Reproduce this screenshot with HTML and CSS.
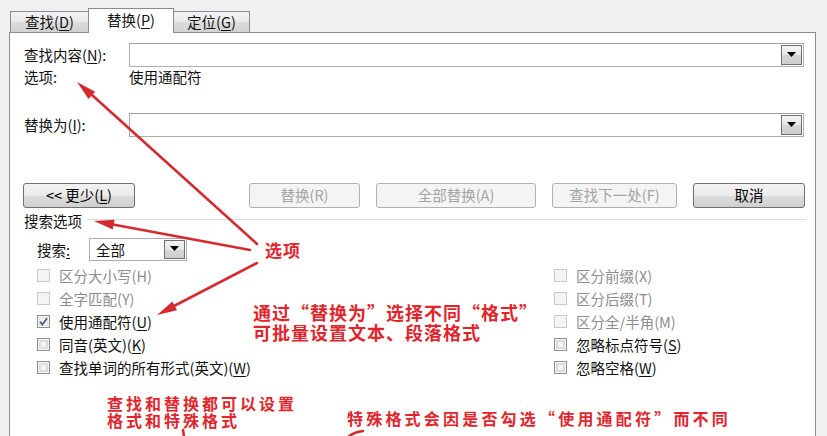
FILE: index.html
```html
<!DOCTYPE html>
<html lang="zh-CN">
<head>
<meta charset="utf-8">
<link rel="stylesheet" href="styles.css">
</head>
<body>
<div class="screen">
  <div class="tabs">
    <div class="tab t1">查找(<u>D</u>)</div>
    <div class="tab active">替换(<u>P</u>)</div>
    <div class="tab t3">定位(<u>G</u>)</div>
  </div>
  <div class="panel">
    <div class="field-row">
      <span class="lbl">查找内容(<u>N</u>):</span>
      <div class="combo"><span class="combo-text"></span><span class="drop"><svg width="9" height="5" viewBox="0 0 9 5"><path d="M0 0h9L4.5 5z" fill="#000"/></svg></span></div>
    </div>
    <div class="opt-row"><span class="lbl">选项:</span><span>使用通配符</span></div>
    <div class="field-row replace-row">
      <span class="lbl">替换为(<u>I</u>):</span>
      <div class="combo"><span class="combo-text"></span><span class="drop"><svg width="9" height="5" viewBox="0 0 9 5"><path d="M0 0h9L4.5 5z" fill="#000"/></svg></span></div>
    </div>
    <div class="btn-row">
      <button class="btn b-less">&lt;&lt; 更少(<u>L</u>)</button>
      <span class="spacer"></span>
      <button class="btn disabled b-rep">替换(R)</button>
      <button class="btn disabled b-all">全部替换(A)</button>
      <button class="btn disabled b-next">查找下一处(F)</button>
      <button class="btn b-cancel">取消</button>
    </div>
    <div class="group-head"><span>搜索选项</span><span class="rule"></span></div>
    <div class="search-row">
      <span class="slbl">搜索<u>:</u></span>
      <div class="select"><span class="sel-text">全部</span><span class="drop"><svg width="9" height="5" viewBox="0 0 9 5"><path d="M0 0h9L4.5 5z" fill="#000"/></svg></span></div>
    </div>
    <div class="checks">
      <div class="col">
        <div class="chk disabled"><span class="box"></span><span>区分大小写(H)</span></div>
        <div class="chk disabled"><span class="box"></span><span>全字匹配(Y)</span></div>
        <div class="chk"><span class="box checked"><svg width="9" height="9" viewBox="0 0 9 9"><path d="M1 4.6l2.4 2.9L8 1.2" stroke="#4a5d8c" stroke-width="1.7" fill="none"/></svg></span><span>使用通配符(<u>U</u>)</span></div>
        <div class="chk"><span class="box"></span><span>同音(英文)(<u>K</u>)</span></div>
        <div class="chk"><span class="box"></span><span>查找单词的所有形式(英文)(<u>W</u>)</span></div>
      </div>
      <div class="col">
        <div class="chk disabled"><span class="box"></span><span>区分前缀(X)</span></div>
        <div class="chk disabled"><span class="box"></span><span>区分后缀(T)</span></div>
        <div class="chk disabled"><span class="box"></span><span>区分全/半角(M)</span></div>
        <div class="chk"><span class="box"></span><span>忽略标点符号(<u>S</u>)</span></div>
        <div class="chk"><span class="box"></span><span>忽略空格(<u>W</u>)</span></div>
      </div>
    </div>
  </div>

  <div class="note n-opt">选项</div>
  <div class="note n-fmt"><div>通过“替换为”选择不同“格式”</div><div>可批量设置文本、段落格式</div></div>
  <div class="note n-both"><div>查找和替换都可以设置</div><div>格式和特殊格式</div></div>
  <div class="note n-spec">特殊格式会因是否勾选“使用通配符”而不同</div>

  <svg class="arrows" width="827" height="436" viewBox="0 0 827 436">
    <g stroke="#d42b2f" stroke-width="2.6" stroke-linecap="round" fill="none">
      <line x1="92" y1="95" x2="257" y2="244"/>
      <line x1="113" y1="224.5" x2="250" y2="250"/>
      <line x1="174" y1="306" x2="257" y2="263"/>
      <line x1="183" y1="430" x2="184" y2="437"/>
      <path d="M348 437 Q354 432 363 431"/>
    </g>
    <g fill="#d42b2f">
      <polygon points="77,82 88.5,99.1 95.2,91.7"/>
      <polygon points="94,221 112.8,229.6 114.6,219.8"/>
      <polygon points="157,315 177,310.2 172.4,301.4"/>
    </g>
  </svg>
</div>
</body>
</html>
```
FILE: styles.css
```css
* { box-sizing: border-box; }
html, body { margin: 0; padding: 0; }
body {
  background: #f0f0f0;
  font-family: "Noto Sans CJK SC", "Noto Sans", sans-serif;
  font-size: 14.5px;
  color: #111;
}
u { text-decoration: underline; text-underline-offset: 2px; }

.screen {
  position: relative;
  width: 827px;
  height: 436px;
  overflow: hidden;
  background: #f0f0f0;
}

/* tabs */
.tabs {
  display: flex;
  align-items: flex-end;
  height: 32px;
  padding: 8px 0 0 10px;
}
.tab {
  height: 21px;
  border: 1px solid #898c95;
  border-bottom: none;
  background: linear-gradient(#f3f3f3, #e9e9e9 50%, #dcdcdc 52%, #d2d2d2);
  display: flex;
  align-items: center;
  justify-content: center;
  line-height: 1;
  color: #111;
}
.t1 { width: 79px; }
.tab.active {
  width: 86px;
  height: 25px;
  margin-left: -1px;
  margin-bottom: -1px;
  background: #fff;
  position: relative;
  z-index: 1;
  padding-bottom: 2px;
}
.t3 { width: 77px; margin-left: -1px; }

/* panel */
.panel {
  margin-left: 9px;
  width: 807px;
  height: 420px;
  background: #fff;
  border: 1px solid #898c95;
  padding: 10px 11px 0 14px;
}

.field-row {
  display: flex;
  align-items: center;
  height: 24px;
}
.lbl { width: 105px; flex: none; line-height: 20px; }
.combo {
  flex: 1;
  height: 24px;
  border: 1px solid #abadb3;
  border-top-color: #9fa1a8;
  display: flex;
  justify-content: flex-end;
  padding: 1px;
}
.drop {
  width: 21px;
  height: 100%;
  border: 1px solid #707070;
  background: linear-gradient(#f4f4f4, #e6e6e6 50%, #d6d6d6 52%, #cfcfcf);
  display: flex;
  align-items: center;
  justify-content: center;
  padding-bottom: 2px;
}
.drop svg { display: block; }

.opt-row {
  display: flex;
  height: 20px;
  line-height: 20px;
}
.replace-row { margin-top: 26px; }

/* buttons */
.btn-row {
  display: flex;
  align-items: center;
  gap: 16px;
  margin-top: 46px;
  height: 25px;
  margin-left: -1px;
}
.spacer { flex: 1; }
.btn {
  height: 25px;
  border: 1px solid #707070;
  border-radius: 3px;
  background: linear-gradient(#f2f2f2, #ebebeb 50%, #dddddd 52%, #cfcfcf);
  font: inherit;
  color: #000;
  padding: 0;
  display: flex;
  align-items: center;
  justify-content: center;
  line-height: 1;
}
.btn.disabled {
  border-color: #adb2b5;
  background: #f4f4f4;
  color: #a3a3a3;
}
.b-less { width: 112px; }
.b-rep { width: 111px; }
.b-all { width: 160px; }
.b-next { width: 125px; }
.b-cancel { width: 112px; margin-right: -1px; }

/* group */
.group-head {
  display: flex;
  align-items: center;
  height: 18px;
  margin-top: 4px;
  line-height: 18px;
}
.rule {
  flex: 1;
  margin-left: 6px;
  margin-right: -2px;
  border-top: 1px solid #dcdcdc;
  border-bottom: 1px solid #fff;
  margin-top: -2px;
}

.search-row {
  display: flex;
  align-items: center;
  height: 23px;
  margin-top: 8px;
  padding-left: 13px;
}
.slbl { width: 52px; line-height: 20px; }
.select {
  width: 98px;
  height: 23px;
  border: 1px solid #abadb3;
  display: flex;
  align-items: center;
  padding: 1px;
}
.sel-text { flex: 1; padding-left: 5px; line-height: 19px; }

/* checkboxes */
.checks {
  display: grid;
  grid-template-columns: 517px 1fr;
  margin-top: 3px;
  padding-left: 13px;
}
.col { display: flex; flex-direction: column; align-items: flex-start; }
.chk {
  display: flex;
  align-items: center;
  height: 23px;
  line-height: 20px;
  white-space: nowrap;
}
.box {
  width: 13px;
  height: 13px;
  flex: none;
  margin-right: 9px;
  border: 1px solid #8e8f8f;
  background: #f4f4f4;
  box-shadow: inset 0 0 0 1px #f4f4f4, inset 0 0 0 3px #dcdcdc;
  display: flex;
  align-items: center;
  justify-content: center;
}
.box.checked {
  box-shadow: inset 0 0 0 1px #f6f6f6, inset 0 0 0 2px #e2e2e2;
}
.chk.disabled { color: #8d8d8d; }
.chk.disabled .box {
  border-color: #c9c9c9;
  background: #f4f4f4;
  box-shadow: none;
}

/* annotations */
.note {
  position: absolute;
  font-family: "Noto Sans CJK SC", sans-serif;
  font-weight: 700;
  color: #e0252d;
  white-space: nowrap;
  z-index: 4;
}
.n-opt { left: 265px; top: 241px; font-size: 17px; line-height: 18px; letter-spacing: 1px; }
.n-fmt { left: 253px; top: 302px; font-size: 18px; line-height: 20px; letter-spacing: 1px; }
.n-both { left: 107px; top: 395px; font-size: 16px; line-height: 17px; letter-spacing: 3px; }
.n-spec { left: 347px; top: 410px; font-size: 16px; line-height: 17px; letter-spacing: 3.2px; }

.arrows {
  position: absolute;
  left: 0;
  top: 0;
  z-index: 5;
  pointer-events: none;
}
```
